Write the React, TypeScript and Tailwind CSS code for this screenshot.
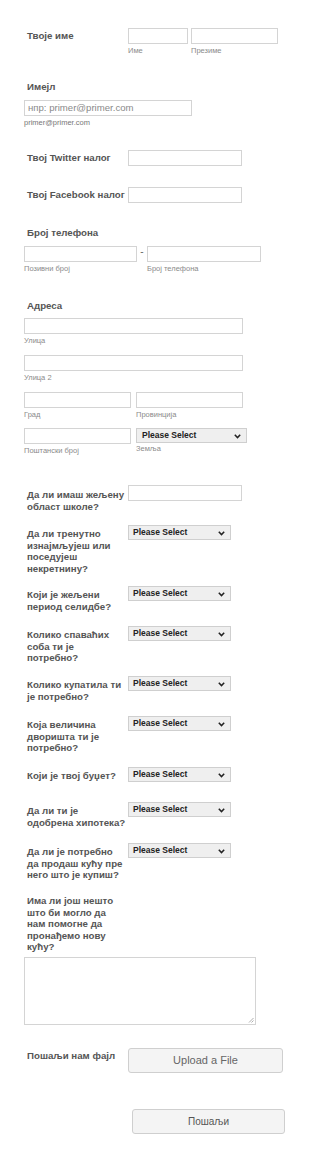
import React from "react";

const font = { fontFamily: '"Liberation Sans", Arial, sans-serif' };

function Input({ w }: { w: string }) {
  return <div className={`${w} h-[16px] border border-[#d4d4d4] bg-white shrink-0`} />;
}

function Sub({ children }: { children: React.ReactNode }) {
  return <div className="text-[7.5px] leading-[10px] text-[#8a8a8a] mt-[2px]">{children}</div>;
}

function Chevron() {
  return (
    <svg width="7" height="5" viewBox="0 0 7 5" className="absolute right-[5px] top-[5px]">
      <path d="M0.8 0.8 L3.5 3.6 L6.2 0.8" stroke="#222" strokeWidth="1.5" fill="none" />
    </svg>
  );
}

function Select({ w }: { w: string }) {
  return (
    <div className={`relative ${w} h-[15px] border border-[#cfcfcf] bg-[#efefef] shrink-0`}>
      <div className="pl-[4px] text-[8.5px] leading-[13px] text-[#222] font-semibold">Please Select</div>
      <Chevron />
    </div>
  );
}

function Lines({ lines }: { lines: string[] }) {
  return (
    <>
      {lines.map((l, i) => (
        <div key={i} className="whitespace-nowrap">
          {l}
        </div>
      ))}
    </>
  );
}

function Label({ lines, mt = "mt-[2px]" }: { lines: string[]; mt?: string }) {
  return (
    <div className={`w-[104px] shrink-0 pl-[3px] ${mt} text-[9.7px] leading-[11.5px] font-bold text-[#555]`}>
      <Lines lines={lines} />
    </div>
  );
}

function QSelect({ lines, h }: { lines: string[]; h: string }) {
  return (
    <div className={`flex ${h}`}>
      <Label mt="mt-[3px]" lines={lines} />
      <Select w="w-[103px]" />
    </div>
  );
}

export default function App() {
  return (
    <div className="w-[310px] min-h-[1157px] bg-white pt-[28px] pl-[24px]" style={font}>
      {/* name */}
      <div className="flex h-[53px]">
        <Label lines={["Твоје име"]} />
        <div className="flex gap-[3px]">
          <div>
            <Input w="w-[60px]" />
            <Sub>Име</Sub>
          </div>
          <div>
            <Input w="w-[87px]" />
            <Sub>Презиме</Sub>
          </div>
        </div>
      </div>
      {/* email */}
      <div className="h-[69px]">
        <div className="pl-[3px] h-[12px] text-[9.7px] leading-[11.5px] font-bold text-[#555]">Имејл</div>
        <div className="mt-[7px] w-[168px] h-[16px] border border-[#d4d4d4] pl-[3px] text-[9.6px] leading-[14px] text-[#8a8a8a]">
          нпр: primer@primer.com
        </div>
        <div className="text-[7.5px] leading-[10px] text-[#777] mt-[2px]">primer@primer.com</div>
      </div>
      {/* twitter */}
      <div className="flex h-[37px]">
        <Label lines={["Твој Twitter налог"]} />
        <Input w="w-[114px]" />
      </div>
      {/* facebook */}
      <div className="flex h-[40px]">
        <Label lines={["Твој Facebook налог"]} />
        <Input w="w-[114px]" />
      </div>
      {/* phone */}
      <div className="h-[73px]">
        <div className="pl-[3px] h-[12px] text-[9.7px] leading-[11.5px] font-bold text-[#555]">Број телефона</div>
        <div className="mt-[7px] flex">
          <div>
            <Input w="w-[113px]" />
            <Sub>Позивни број</Sub>
          </div>
          <div className="w-[10px] text-center text-[10px] leading-[12px] text-[#666]">-</div>
          <div>
            <Input w="w-[114px]" />
            <Sub>Број телефона</Sub>
          </div>
        </div>
      </div>
      {/* address */}
      <div className="pl-[3px] h-[18px] text-[9.7px] leading-[11.5px] font-bold text-[#555]">Адреса</div>
      <div className="h-[37px]">
        <Input w="w-[219px]" />
        <Sub>Улица</Sub>
      </div>
      <div className="h-[37px]">
        <Input w="w-[219px]" />
        <Sub>Улица 2</Sub>
      </div>
      <div className="flex gap-[5px] h-[36px]">
        <div>
          <Input w="w-[107px]" />
          <Sub>Град</Sub>
        </div>
        <div>
          <Input w="w-[107px]" />
          <Sub>Провинција</Sub>
        </div>
      </div>
      <div className="flex gap-[5px] h-[57px]">
        <div>
          <Input w="w-[107px]" />
          <Sub>Поштански број</Sub>
        </div>
        <div>
          <div className="relative w-[111px] h-[15px] border border-[#cfcfcf] bg-[#efefef]">
            <div className="pl-[5px] text-[8.5px] leading-[13px] text-[#222] font-semibold">Please Select</div>
            <Chevron />
          </div>
          <div className="text-[7.5px] leading-[10px] text-[#8a8a8a] mt-[1px]">Земља</div>
        </div>
      </div>
      {/* questions */}
      <div className="flex h-[40px]">
        <Label mt="mt-[4px]" lines={["Да ли имаш жељену", "област школе?"]} />
        <Input w="w-[114px]" />
      </div>
      <QSelect h="h-[61px]" lines={["Да ли тренутно", "изнајмљујеш или", "поседујеш", "некретнину?"]} />
      <QSelect h="h-[40px]" lines={["Који је жељени", "период селидбе?"]} />
      <QSelect h="h-[50px]" lines={["Колико спаваћих", "соба ти је", "потребно?"]} />
      <QSelect h="h-[40px]" lines={["Колико купатила ти", "је потребно?"]} />
      <QSelect h="h-[51px]" lines={["Која величина", "дворишта ти је", "потребно?"]} />
      <QSelect h="h-[35px]" lines={["Који је твој буџет?"]} />
      <QSelect h="h-[41px]" lines={["Да ли ти је", "одобрена хипотека?"]} />
      <QSelect h="h-[52px]" lines={["Да ли је потребно", "да продаш кућу пре", "него што је купиш?"]} />
      {/* textarea */}
      <div className="h-[153px]">
        <div className="w-[104px] pl-[3px] text-[9.7px] leading-[11.5px] font-bold text-[#555]">
          <Lines lines={["Има ли још нешто", "што би могло да", "нам помогне да", "пронађемо нову", "кућу?"]} />
        </div>
        <div className="relative mt-[4.5px] w-[232px] h-[68px] border border-[#d4d4d4] bg-white">
          <svg width="6" height="6" viewBox="0 0 6 6" className="absolute right-[1px] bottom-[1px]">
            <path d="M5.5 1 L1 5.5 M5.5 3.5 L3.5 5.5" stroke="#999" strokeWidth="0.8" />
          </svg>
        </div>
      </div>
      {/* upload */}
      <div className="flex h-[61px]">
        <Label lines={["Пошаљи нам фајл"]} />
        <div className="w-[155px] h-[25px] rounded-[3px] border border-[#cfcfcf] bg-[#f4f4f4] flex items-center justify-center text-[11px] text-[#666]">
          Upload a File
        </div>
      </div>
      <div className="pl-[108px]">
        <div className="w-[153px] h-[25px] rounded-[3px] border border-[#cfcfcf] bg-[#f4f4f4] flex items-center justify-center text-[10px] text-[#555]">
          Пошаљи
        </div>
      </div>
    </div>
  );
}
